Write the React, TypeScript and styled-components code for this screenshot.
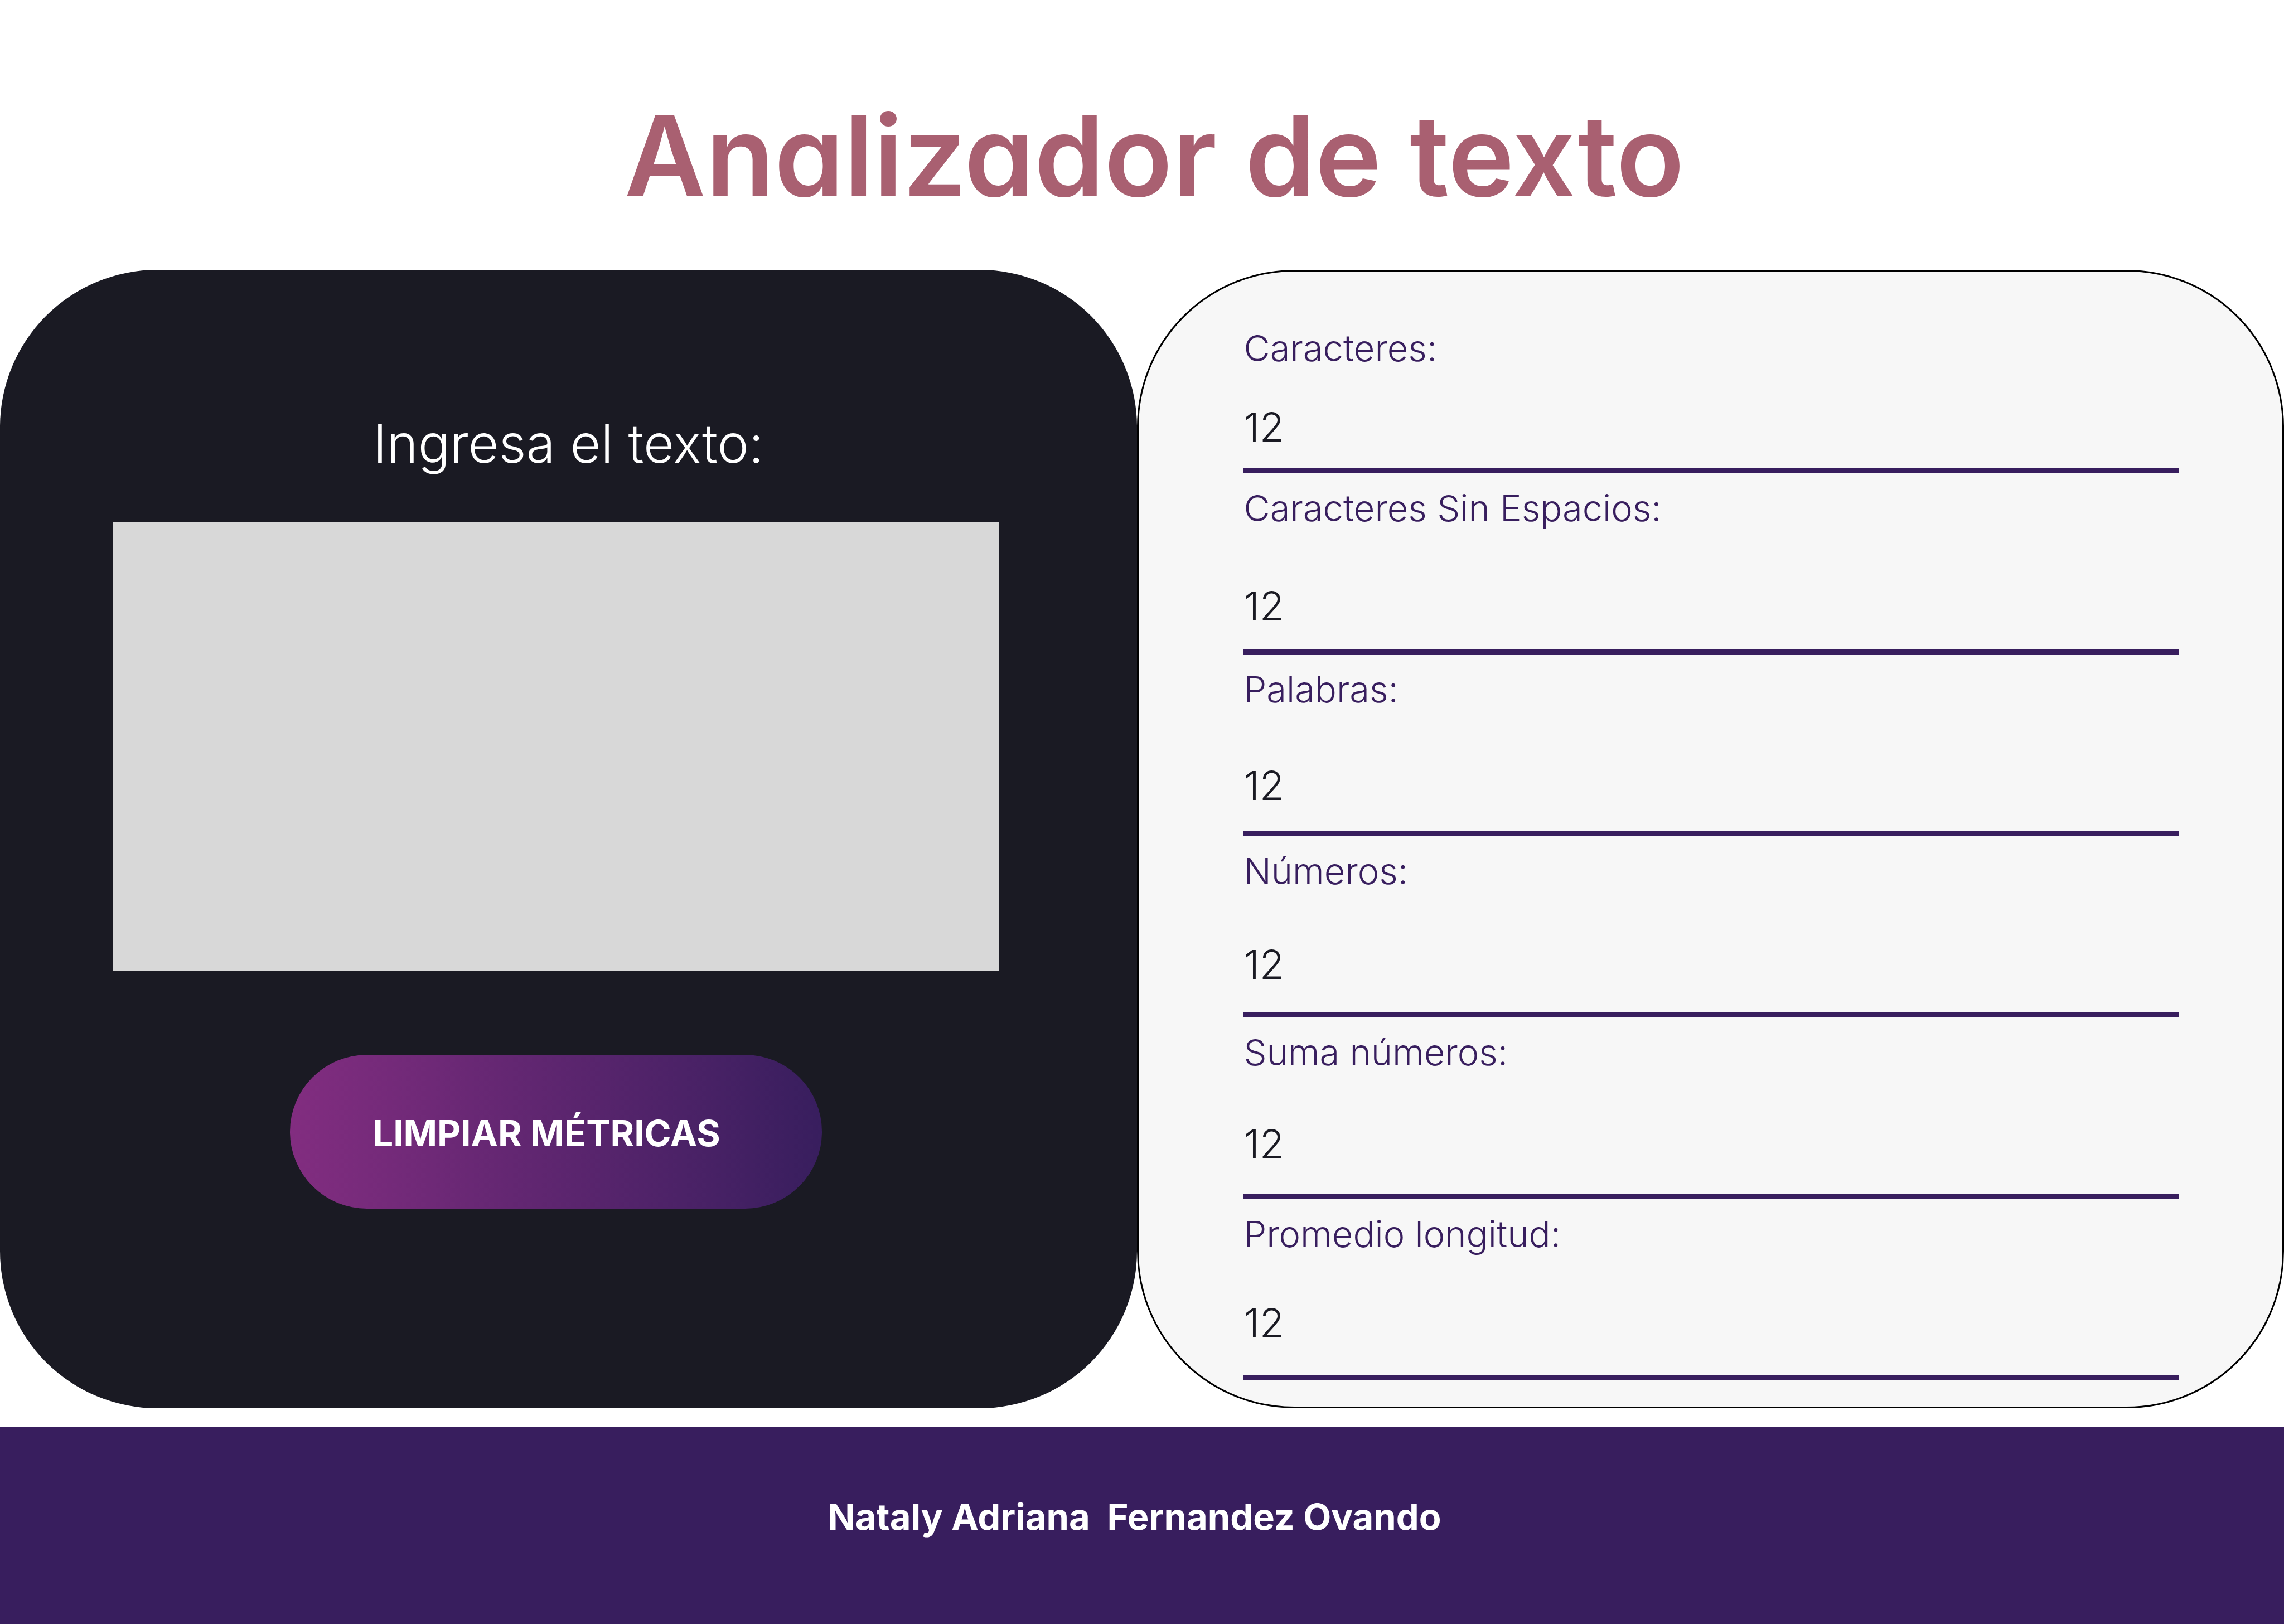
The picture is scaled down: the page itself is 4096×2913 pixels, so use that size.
import React, { useState } from 'react';
import styled, { createGlobalStyle } from 'styled-components';

const color = {
  ink: '#1a1a23',
  purple: '#381e5e',
  magenta: '#822d80',
  rose: '#a96071',
  field: '#d8d8d8',
  paper: '#f7f7f7',
};

const GlobalStyle = createGlobalStyle`
  *, *::before, *::after { box-sizing: border-box; }
  body {
    margin: 0;
    background: #ffffff;
    font-family: Inter, "Liberation Sans", sans-serif;
  }
  h1, p, dl, dd { margin: 0; }
`;

const Page = styled.div`
  display: flex;
  flex-direction: column;
  min-height: 100vh;
`;

const Header = styled.header`
  padding: 155px 0 81px 44px;
`;

const Title = styled.h1`
  color: ${color.rose};
  font-size: 201px;
  font-weight: 600;
  line-height: 248px;
  text-align: center;
  font-feature-settings: "cv11";
`;

const Panels = styled.main`
  flex: 1;
  display: grid;
  grid-template-columns: 717fr 723fr;
  margin-bottom: 34px;
`;

const InputPanel = styled.form`
  display: flex;
  flex-direction: column;
  align-items: center;
  padding: 252px 247px 80px 202px;
  border-radius: 282px;
  background: ${color.ink};
`;

const Prompt = styled.label`
  padding-left: 44px;
  margin-bottom: 80px;
  color: #ffffff;
  font-size: 95px;
  font-weight: 300;
  line-height: 120px;
`;

const TextField = styled.textarea`
  display: block;
  width: 100%;
  height: 805px;
  margin: 0 0 151px;
  padding: 40px;
  border: 0;
  border-radius: 0;
  outline: none;
  resize: none;
  background: ${color.field};
  color: ${color.ink};
  font: inherit;
  font-size: 65px;
`;

const ClearButton = styled.button`
  width: 60%;
  height: 276px;
  padding: 6px 34px 0 0;
  border: 0;
  border-radius: 138px;
  background: linear-gradient(90deg, ${color.magenta}, ${color.purple});
  color: #ffffff;
  font-family: inherit;
  font-size: 65px;
  font-weight: 700;
  line-height: 80px;
  cursor: pointer;
`;

const ResultsPanel = styled.section`
  display: flex;
  flex-direction: column;
  padding: 75px 185px 47px 188px;
  border: 3px solid #000000;
  border-radius: 282px;
  background: ${color.paper};
`;

const MetricList = styled.dl`
  flex: 1;
  display: grid;
  grid-template-rows: 287px repeat(5, 1fr);
`;

const Metric = styled.div<{ $below: number }>`
  display: flex;
  flex-direction: column;
  justify-content: space-between;
  padding: 23px 0 ${(p) => p.$below}px;
  border-bottom: 9px solid ${color.purple};
`;

const MetricName = styled.dt`
  color: ${color.purple};
  font-size: 65px;
  font-weight: 300;
  line-height: 80px;
`;

const MetricValue = styled.dd`
  color: ${color.ink};
  font-size: 72px;
  font-weight: 300;
  line-height: 88px;
`;

const Footer = styled.footer`
  padding: 121px 27px 152px 0;
  background: ${color.purple};
`;

const Author = styled.p`
  color: #ffffff;
  font-size: 65px;
  font-weight: 700;
  line-height: 80px;
  text-align: center;
  white-space: pre;
`;

const metrics = [
  { name: 'Caracteres:', value: 12 },
  { name: 'Caracteres Sin Espacios:', value: 12 },
  { name: 'Palabras:', value: 12 },
  { name: 'Números:', value: 12 },
  { name: 'Suma números:', value: 12 },
  { name: 'Promedio longitud:', value: 12 },
];

export default function App() {
  const [text, setText] = useState('');

  return (
    <Page>
      <GlobalStyle />
      <Header>
        <Title>Analizador de texto</Title>
      </Header>
      <Panels>
        <InputPanel onSubmit={(e) => e.preventDefault()}>
          <Prompt htmlFor="texto">Ingresa el texto:</Prompt>
          <TextField id="texto" value={text} onChange={(e) => setText(e.target.value)} />
          <ClearButton type="button" onClick={() => setText('')}>
            LIMPIAR MÉTRICAS
          </ClearButton>
        </InputPanel>
        <ResultsPanel>
          <MetricList>
            {metrics.map((m, i) => (
              <Metric key={m.name} $below={30 + 4 * i}>
                <MetricName>{m.name}</MetricName>
                <MetricValue>{m.value}</MetricValue>
              </Metric>
            ))}
          </MetricList>
        </ResultsPanel>
      </Panels>
      <Footer>
        <Author>{'Nataly Adriana  Fernandez Ovando'}</Author>
      </Footer>
    </Page>
  );
}
